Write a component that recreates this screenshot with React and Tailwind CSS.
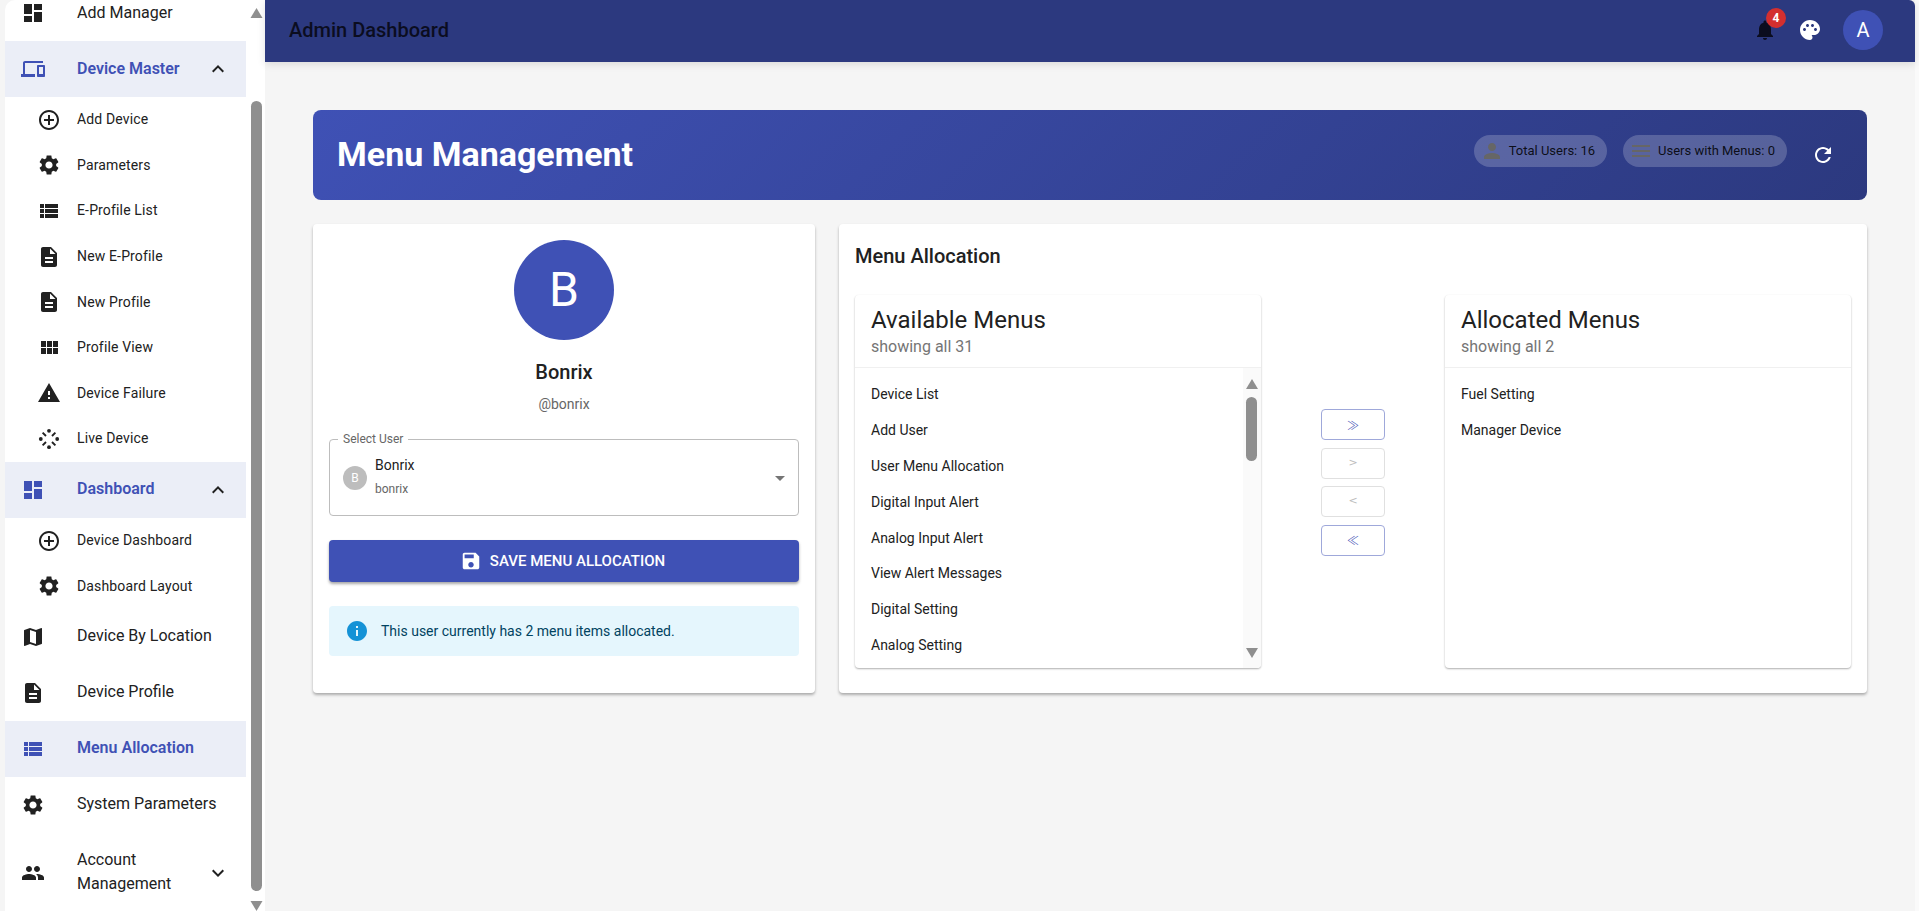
// Menu Management admin page: sidebar, top bar, user card and menu allocation lists.
const ICON = {
  dashboard: "M3 13h8V3H3v10zm0 8h8v-6H3v6zm10 0h8V11h-8v10zm0-18v6h8V3h-8z",
  devices: "M4 6h18V4H4c-1.1 0-2 .9-2 2v11H0v3h14v-3H4V6zm19 2h-6c-.55 0-1 .45-1 1v10c0 .55.45 1 1 1h6c.55 0 1-.45 1-1V9c0-.55-.45-1-1-1zm-1 9h-4v-7h4v7z",
  add: "M13 7h-2v4H7v2h4v4h2v-4h4v-2h-4V7zm-1-5C6.48 2 2 6.48 2 12s4.48 10 10 10 10-4.48 10-10S17.52 2 12 2zm0 18c-4.41 0-8-3.59-8-8s3.59-8 8-8 8 3.59 8 8-3.59 8-8 8z",
  settings: "M19.14 12.94c.04-.3.06-.61.06-.94 0-.32-.02-.64-.07-.94l2.03-1.58c.18-.14.23-.41.12-.61l-1.92-3.32c-.12-.22-.37-.29-.59-.22l-2.39.96c-.5-.38-1.03-.7-1.62-.94l-.36-2.54c-.04-.24-.24-.41-.48-.41h-3.84c-.24 0-.43.17-.47.41l-.36 2.54c-.59.24-1.13.57-1.62.94l-2.39-.96c-.22-.08-.47 0-.59.22L2.74 8.87c-.12.21-.08.47.12.61l2.03 1.58c-.05.3-.09.63-.09.94s.02.64.07.94l-2.03 1.58c-.18.14-.23.41-.12.61l1.92 3.32c.12.22.37.29.59.22l2.39-.96c.5.38 1.03.7 1.62.94l.36 2.54c.05.24.24.41.48.41h3.84c.24 0 .44-.17.47-.41l.36-2.54c.59-.24 1.13-.56 1.62-.94l2.39.96c.22.08.47 0 .59-.22l1.92-3.32c.12-.22.07-.47-.12-.61l-2.01-1.58zM12 15.6c-1.98 0-3.6-1.62-3.6-3.6s1.62-3.6 3.6-3.6 3.6 1.62 3.6 3.6-1.62 3.6-3.6 3.6z",
  list: "M3 14h4v-4H3v4zm0 5h4v-4H3v4zM3 9h4V5H3v4zm5 5h13v-4H8v4zm0 5h13v-4H8v4zM8 5v4h13V5H8z",
  doc: "M14 2H6c-1.1 0-1.99.9-1.99 2L4 20c0 1.1.89 2 1.99 2H18c1.1 0 2-.9 2-2V8l-6-6zm2 16H8v-2h8v2zm0-4H8v-2h8v2zm-3-5V3.5L18.5 9H13z",
  module: "M4 11h5V5H4v6zm0 7h5v-6H4v6zm6 0h5v-6h-5v6zm6 0h5v-6h-5v6zm-6-7h5V5h-5v6zm6-6v6h5V5h-5z",
  warning: "M1 21h22L12 2 1 21zm12-3h-2v-2h2v2zm0-4h-2v-4h2v4z",
  map: "M20.5 3l-.16.03L15 5.1 9 3 3.36 4.9c-.21.07-.36.25-.36.48V20.5c0 .28.22.5.5.5l.16-.03L9 18.9l6 2.1 5.64-1.9c.21-.07.36-.25.36-.48V3.5c0-.28-.22-.5-.5-.5zM15 19l-6-2.11V5l6 2.11V19z",
  people: "M16 11c1.66 0 2.99-1.34 2.99-3S17.66 5 16 5c-1.66 0-3 1.34-3 3s1.34 3 3 3zm-8 0c1.66 0 2.99-1.34 2.99-3S9.66 5 8 5C6.34 5 5 6.34 5 8s1.34 3 3 3zm0 2c-2.33 0-7 1.17-7 3.5V19h14v-2.5c0-2.33-4.67-3.5-7-3.5zm8 0c-.29 0-.62.02-.97.05 1.16.84 1.97 1.97 1.97 3.45V19h6v-2.5c0-2.33-4.67-3.5-7-3.5z",
  less: "M12 8l-6 6 1.41 1.41L12 10.83l4.59 4.58L18 14z",
  more: "M16.59 8.59L12 13.17 7.41 8.59 6 10l6 6 6-6z",
  bell: "M12 22c1.1 0 2-.9 2-2h-4c0 1.1.89 2 2 2zm6-6v-5c0-3.07-1.64-5.64-4.5-6.32V4c0-.83-.67-1.5-1.5-1.5s-1.5.67-1.5 1.5v.68C7.63 5.36 6 7.92 6 11v5l-2 2v1h16v-1l-2-2z",
  palette: "M12 2C6.49 2 2 6.49 2 12s4.49 10 10 10c1.38 0 2.5-1.12 2.5-2.5 0-.61-.23-1.2-.64-1.67-.08-.1-.13-.21-.13-.33 0-.28.22-.5.5-.5H16c3.31 0 6-2.69 6-6 0-4.96-4.49-9-10-9zm5.5 11c-.83 0-1.5-.67-1.5-1.5s.67-1.5 1.5-1.5 1.5.67 1.5 1.5-.67 1.5-1.5 1.5zm-3-4c-.83 0-1.5-.67-1.5-1.5S13.67 6 14.5 6s1.5.67 1.5 1.5S15.33 9 14.5 9zM5 11.5c0-.83.67-1.5 1.5-1.5s1.5.67 1.5 1.5S7.33 13 6.5 13 5 12.33 5 11.5zm6-4c0 .83-.67 1.5-1.5 1.5S8 8.33 8 7.5 8.67 6 9.5 6s1.5.67 1.5 1.5z",
  person: "M12 12c2.21 0 4-1.79 4-4s-1.79-4-4-4-4 1.79-4 4 1.79 4 4 4zm0 2c-2.67 0-8 1.34-8 4v2h16v-2c0-2.66-5.33-4-8-4z",
  menu: "M3 18h18v-2H3v2zm0-5h18v-2H3v2zm0-7v2h18V6H3z",
  refresh: "M17.65 6.35C16.2 4.9 14.21 4 12 4c-4.42 0-7.99 3.58-7.99 8s3.57 8 7.99 8c3.73 0 6.84-2.55 7.73-6h-2.08c-.82 2.33-3.04 4-5.65 4-3.31 0-6-2.69-6-6s2.69-6 6-6c1.66 0 3.14.69 4.22 1.78L13 11h7V4l-2.35 2.35z",
  save: "M17 3H5c-1.11 0-2 .9-2 2v14c0 1.1.89 2 2 2h14c1.1 0 2-.9 2-2V7l-4-4zm-5 16c-1.66 0-3-1.34-3-3s1.34-3 3-3 3 1.34 3 3-1.34 3-3 3zm3-10H5V5h10v4z",
  info: "M12 2C6.48 2 2 6.48 2 12s4.48 10 10 10 10-4.48 10-10S17.52 2 12 2zm1 15h-2v-6h2v6zm0-8h-2V7h2v2z",
  drop: "M7 10l5 5 5-5z",
};

const Icon = ({ name, className = "w-6 h-6" }) => (
  <svg viewBox="0 0 24 24" fill="currentColor" className={`shrink-0 ${className}`}>
    <path d={ICON[name]} />
  </svg>
);

const LiveIcon = () => (
  <svg viewBox="0 0 24 24" fill="currentColor" className="w-6 h-6 shrink-0">
    <circle cx="12" cy="3.8" r="1.9" />
    <circle cx="12" cy="20.2" r="1.9" />
    <circle cx="3.8" cy="12" r="1.9" />
    <circle cx="20.2" cy="12" r="1.9" />
    <path d="M5.6 5.6l3.4 3.4M18.4 5.6L15 9M5.6 18.4L9 15M18.4 18.4L15 15" stroke="currentColor" strokeWidth="1.9" fill="none" />
  </svg>
);

const Arrow = ({ up, className }) => (
  <svg viewBox="0 0 12 10" fill="#8f8f8f" className={className}>
    <path d={up ? "M6 0l6 10H0z" : "M6 10L0 0h12z"} />
  </svg>
);

const SUB_MASTER = [
  ["add", "Add Device"],
  ["settings", "Parameters"],
  ["list", "E-Profile List"],
  ["doc", "New E-Profile"],
  ["doc", "New Profile"],
  ["module", "Profile View"],
  ["warning", "Device Failure"],
  ["live", "Live Device"],
];
const SUB_DASH = [
  ["add", "Device Dashboard"],
  ["settings", "Dashboard Layout"],
];
const AVAILABLE = ["Device List", "Add User", "User Menu Allocation", "Digital Input Alert", "Analog Input Alert", "View Alert Messages", "Digital Setting", "Analog Setting"];
const ALLOCATED = ["Fuel Setting", "Manager Device"];

function NavRow({ icon, label, active, caret }) {
  return (
    <div className={`flex items-center h-[56px] pl-[16px] shrink-0 ${active ? "bg-[#ebeef7] text-[#3f51b5]" : "text-[#212121]"}`}>
      <Icon name={icon} />
      <span className={`ml-[32px] mb-[1px] text-[16px] leading-[24px] ${active ? "font-semibold" : ""}`}>{label}</span>
      {caret && <Icon name={caret} className="w-6 h-6 ml-auto mr-[16px] text-[#212121]" />}
    </div>
  );
}

function SubRow({ icon, label }) {
  return (
    <div className="flex items-center h-[45.6px] pl-[32px] shrink-0 text-[#212121]">
      {icon === "live" ? <LiveIcon /> : <Icon name={icon} />}
      <span className="ml-[16px] mb-[1px] text-[14px] leading-[20px] tracking-[0.15px]">{label}</span>
    </div>
  );
}

function Sidebar() {
  return (
    <aside className="flex w-[265px] h-[911px] shrink-0 pl-[5px] bg-[#f5f5f5]">
      <div className="flex flex-1 min-w-0 bg-white rounded-tl-[10px] overflow-hidden">
        <nav className="w-[241px] shrink-0 -mt-[15px] flex flex-col">
          <NavRow icon="dashboard" label="Add Manager" />
          <NavRow icon="devices" label="Device Master" active caret="less" />
          <div className="flex flex-col">
            {SUB_MASTER.map(([i, l]) => <SubRow key={l} icon={i} label={l} />)}
          </div>
          <NavRow icon="dashboard" label="Dashboard" active caret="less" />
          <div className="flex flex-col">
            {SUB_DASH.map(([i, l]) => <SubRow key={l} icon={i} label={l} />)}
          </div>
          <NavRow icon="map" label="Device By Location" />
          <NavRow icon="doc" label="Device Profile" />
          <NavRow icon="list" label="Menu Allocation" active />
          <NavRow icon="settings" label="System Parameters" />
          <div className="flex items-center h-[56px] mt-[12px] pl-[16px] shrink-0 text-[#212121]">
            <Icon name="people" />
            <span className="ml-[32px] mb-[2px] w-[110px] text-[16px] leading-[24px]">Account Management</span>
            <Icon name="more" className="w-6 h-6 ml-auto mr-[16px]" />
          </div>
        </nav>
        <div className="flex flex-col items-center w-[19px] pl-[1px] pt-[8px]">
          <Arrow up className="w-[13px] h-[10px]" />
          <div className="w-[11px] h-[791px] mt-[83px] rounded-full bg-[#8f8f8f]" />
          <Arrow className="w-[13px] h-[10px] mt-[10px]" />
        </div>
      </div>
    </aside>
  );
}

function TopBar() {
  return (
    <header className="flex items-center h-[62px] shrink-0 pl-[24px] pr-[32px] pb-[2px] bg-[#2c397f] rounded-tr-[6px] shadow-[0_2px_8px_rgba(0,0,0,0.12)]">
      <h1 className="text-[20px] leading-[32px] font-medium text-[#0b0d1f]">Admin Dashboard</h1>
      <div className="ml-auto flex items-center">
        <div className="relative">
          <Icon name="bell" className="w-6 h-6 text-[#0b0d1f]" />
          <span className="absolute -top-[10px] left-[13px] flex items-center justify-center w-5 h-5 rounded-full bg-[#d32f2f] text-white text-[12px] font-bold">4</span>
        </div>
        <Icon name="palette" className="w-6 h-6 ml-[21px] text-white" />
        <div className="flex items-center justify-center w-10 h-10 ml-[21px] rounded-full bg-[#3f51b5] text-white text-[20px]">A</div>
      </div>
    </header>
  );
}

function Chip({ icon, label }) {
  return (
    <div className="flex items-center h-[32px] pl-[6px] pr-[12px] rounded-full bg-white/20 text-[13px] text-[rgba(0,0,0,0.87)]">
      <Icon name={icon} className="w-6 h-6 text-[#666]" />
      <span className="ml-[5px]">{label}</span>
    </div>
  );
}

function Banner() {
  return (
    <div className="flex items-center h-[90px] pl-[24px] pr-[32px] rounded-[8px] bg-[linear-gradient(135deg,#3f51b5,#2c397f)]">
      <h2 className="-mt-[3px] text-[34px] font-bold leading-[40px] text-white">Menu Management</h2>
      <div className="ml-auto flex items-center">
        <div className="flex items-center -mt-[8px]">
          <Chip icon="person" label="Total Users: 16" />
          <div className="ml-[16px]"><Chip icon="menu" label="Users with Menus: 0" /></div>
        </div>
        <Icon name="refresh" className="w-6 h-6 ml-[24px] text-white" />
      </div>
    </div>
  );
}

function UserCard() {
  return (
    <section className="w-[502px] h-[469px] shrink-0 px-[16px] pt-[16px] bg-white rounded-[4px] shadow-[0_2px_3px_rgba(0,0,0,0.3)]">
      <div className="flex flex-col items-center">
        <div className="flex items-center justify-center w-[100px] h-[100px] rounded-full bg-[#3f51b5] text-white text-[48px]">B</div>
        <div className="mt-[16px] text-[20px] leading-[32px] font-medium text-[#212121]">Bonrix</div>
        <div className="mt-[6px] text-[14px] leading-[20px] text-[#666]">@bonrix</div>
      </div>
      <div className="relative mt-[25px] flex items-center h-[77px] px-[13px] border border-[#bdbdbd] rounded-[4px]">
        <span className="absolute -top-[9px] left-[8px] px-[5px] bg-white text-[12px] leading-[16px] text-[#666]">Select User</span>
        <div className="flex items-center justify-center w-6 h-6 rounded-full bg-[#bdbdbd] text-white text-[12px]">B</div>
        <div className="ml-[8px] -mt-[1px]">
          <div className="text-[14px] leading-[20px] text-[#212121]">Bonrix</div>
          <div className="mt-[4px] text-[12px] leading-[20px] text-[#666]">bonrix</div>
        </div>
        <Icon name="drop" className="w-6 h-6 ml-auto -mr-[7px] text-[#757575]" />
      </div>
      <button className="flex items-center justify-center w-full h-[42px] mt-[24px] pr-[3px] rounded-[4px] bg-[#3f51b5] text-white text-[15px] font-medium uppercase shadow-[0_2px_3px_rgba(0,0,0,0.35)]">
        <Icon name="save" className="w-[22px] h-[22px] mr-[8px]" />
        Save Menu Allocation
      </button>
      <div className="flex items-center h-[50px] mt-[24px] pl-[16px] rounded-[4px] bg-[#e5f6fd] text-[14px] text-[#014361]">
        <Icon name="info" className="w-6 h-6 text-[#1592d6]" />
        <span className="ml-[12px]">This user currently has 2 menu items allocated.</span>
      </div>
    </section>
  );
}

function ListPanel({ title, note, items, scroll }) {
  return (
    <div className="flex flex-col w-[406px] h-[373px] shrink-0 bg-white rounded-[4px] shadow-[0_1px_2px_rgba(0,0,0,0.32)] overflow-hidden">
      <div className="h-[73px] shrink-0 px-[16px] pt-[9px] border-b border-[#f0f0f0]">
        <div className="text-[24px] leading-[32px] text-[#212121]">{title}</div>
        <div className="text-[16px] leading-[22px] text-[#757575]">{note}</div>
      </div>
      <div className="flex flex-1 min-h-0">
        <ul className="flex-1 pt-[8.5px] overflow-hidden">
          {items.map((m) => (
            <li key={m} className="flex items-center h-[35.9px] px-[16px] text-[14px] text-[#212121]">{m}</li>
          ))}
        </ul>
        {scroll && (
          <div className="flex flex-col items-center w-[18px] shrink-0 pt-[11px] pr-[1px] bg-[#fafafa]">
            <Arrow up className="w-[12px] h-[10px]" />
            <div className="w-[11px] h-[64px] mt-[8px] rounded-full bg-[#8f8f8f]" />
            <Arrow className="w-[12px] h-[10px] mt-auto mb-[10px]" />
          </div>
        )}
      </div>
    </div>
  );
}

function MoveButton({ label, enabled }) {
  return (
    <button className={`flex items-center justify-center w-[64px] h-[31px] rounded-[4px] border ${enabled ? "border-[#9fa8da] text-[#3f51b5] text-[12px] font-light font-['Noto_Sans_CJK_SC',sans-serif]" : "border-[#e0e0e0] text-[#bdbdbd] text-[11px] font-['DejaVu_Sans',sans-serif]"}`}>
      {label}
    </button>
  );
}

function AllocationCard() {
  return (
    <section className="flex-1 min-w-0 h-[469px] px-[16px] pt-[16px] bg-white rounded-[4px] shadow-[0_2px_3px_rgba(0,0,0,0.3)]">
      <h3 className="text-[20px] leading-[32px] font-medium text-[#212121]">Menu Allocation</h3>
      <div className="flex items-start justify-between mt-[23px]">
        <ListPanel title="Available Menus" note="showing all 31" items={AVAILABLE} scroll />
        <div className="flex flex-col gap-[7.6px] mt-[114px]">
          <MoveButton label="≫" enabled />
          <MoveButton label=">" />
          <MoveButton label="<" />
          <MoveButton label="≪" enabled />
        </div>
        <ListPanel title="Allocated Menus" note="showing all 2" items={ALLOCATED} />
      </div>
    </section>
  );
}

export default function App() {
  return (
    <div className="flex h-[911px] overflow-hidden bg-[#fafafa] font-['Roboto',sans-serif]">
      <Sidebar />
      <main className="flex flex-col flex-1 min-w-0 mr-[4px] bg-[#f5f5f5]">
        <TopBar />
        <div className="px-[48px] pt-[48px]">
          <Banner />
          <div className="flex gap-[24px] mt-[24px]">
            <UserCard />
            <AllocationCard />
          </div>
        </div>
      </main>
    </div>
  );
}
